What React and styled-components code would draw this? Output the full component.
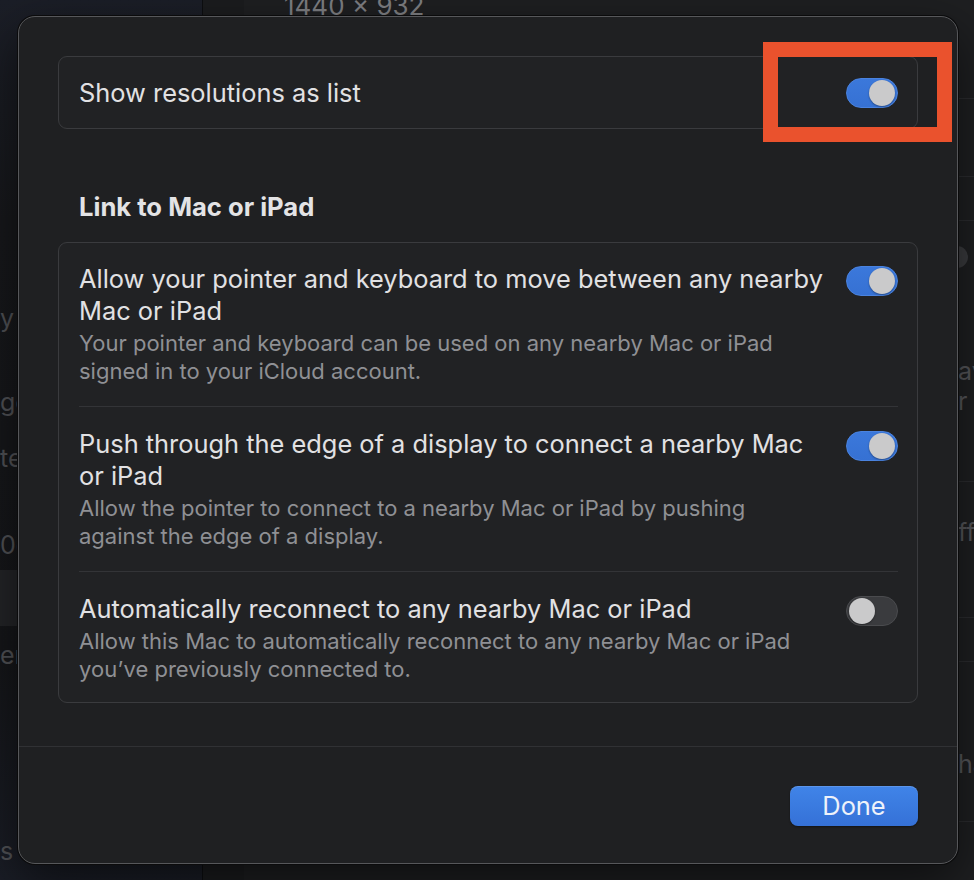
import React, { useState } from "react";
import styled, { createGlobalStyle } from "styled-components";

const Global = createGlobalStyle`
  html, body { margin: 0; padding: 0; background: #1e1f21; }
  body { font-family: Inter, "Noto Sans", "Liberation Sans", sans-serif; -webkit-font-smoothing: antialiased; }
  * { box-sizing: border-box; }
`;

const Page = styled.div`
  position: relative;
  width: 974px;
  height: 880px;
  overflow: hidden;
  display: flex;
  background: #1e1f21;
`;

/* ---------- backdrop (the settings window behind the sheet) ---------- */
const Sidebar = styled.aside`
  width: 203px;
  flex: none;
  display: flex;
  flex-direction: column;
  background: linear-gradient(180deg, #1b1e27 0%, #17181b 25%, #151619 75%, #1a1d26 100%);
  border-right: 1px solid #0d0e10;
`;

const SideItem = styled.div`
  height: ${(p) => p.$h}px;
  flex: none;
  display: flex;
  align-items: center;
  font-size: 25px;
  color: #505155;
  white-space: nowrap;
  background: ${(p) => (p.$active ? "#232427" : "transparent")};
`;

const Main = styled.main`
  flex: 1;
  display: flex;
  flex-direction: column;
  background: #1e1f21;
  border-left: 41px solid #1b1c1e;
`;

const SizeLabel = styled.div`
  height: 40px;
  flex: none;
  padding-left: 40px;
  margin-top: -7px;
  font-size: 26px;
  color: #7d7e82;
  line-height: 26px;
`;

const BackRow = styled.div`
  height: ${(p) => p.$h}px;
  flex: none;
  display: flex;
  align-items: center;
  justify-content: flex-end;
  border-bottom: ${(p) => (p.$line ? "1px solid #2b2c2f" : "none")};
  font-size: 25px;
  color: #55565a;
  white-space: nowrap;
  overflow: hidden;
`;

const BackText = styled.span`
  width: 16px;
  overflow: hidden;
`;

const BackKnob = styled.span`
  width: 16px;
  height: 22px;
  border-radius: 0 11px 11px 0;
  background: #3a3b3e;
  margin-right: 6px;
`;

/* ---------- sheet ---------- */
const Sheet = styled.section`
  position: absolute;
  left: 18px;
  top: 16px;
  width: 940px;
  height: 848px;
  display: flex;
  flex-direction: column;
  background: #1f2022;
  border: 1px solid #56575a;
  border-radius: 17px;
  box-shadow: 0 0 0 1px #0b0b0c, 0 18px 50px rgba(0, 0, 0, 0.55);
  color: #e1e1e3;
`;

const Body = styled.div`
  flex: 1;
  display: flex;
  flex-direction: column;
  padding: 39px 39px 43px 39px;
`;

const Card = styled.div`
  display: flex;
  flex-direction: column;
  background: #212224;
  border: 1px solid #3a3b3e;
  border-radius: 9px;
  padding: 0 19px 0 20px;
`;

const SingleRow = styled.div`
  height: 71px;
  display: flex;
  align-items: center;
  justify-content: space-between;
  font-size: 25.4px;
  color: #e1e1e3;
`;

const SectionTitle = styled.h2`
  margin: 64px 0 21px;
  padding-left: 21px;
  font-size: 25.6px;
  line-height: 28px;
  font-weight: 700;
  color: #e3e3e5;
`;

const Row = styled.div`
  display: flex;
  align-items: flex-start;
  justify-content: space-between;
  gap: 12px;
  padding: ${(p) => (p.$first ? "20px" : "21px")} 0 ${(p) => (p.$last ? "19px" : "21px")};
  border-top: ${(p) => (p.$first ? "none" : "1px solid #333437")};
`;

const Texts = styled.div`
  flex: 1;
  min-width: 0;
  display: flex;
  flex-direction: column;
  gap: 2px;
`;

const RowTitle = styled.div`
  font-size: 25.4px;
  line-height: 32px;
  color: #e1e1e3;
  white-space: nowrap;
`;

const RowDesc = styled.div`
  font-size: 22px;
  line-height: 28px;
  color: #8f9094;
  white-space: nowrap;
`;

const ToggleTrack = styled.button`
  flex: none;
  width: 52px;
  height: 30px;
  margin-top: ${(p) => p.$offset || 0}px;
  padding: 2px;
  border-radius: 15px;
  border: 1px solid ${(p) => (p.$on ? "#4a83df" : "#4a4b4e")};
  background: ${(p) => (p.$on ? "linear-gradient(180deg, #3b78db, #3671d3)" : "#3a3b3e")};
  display: flex;
  justify-content: ${(p) => (p.$on ? "flex-end" : "flex-start")};
  align-items: center;
  cursor: pointer;
`;

const Knob = styled.span`
  width: 26px;
  height: 26px;
  border-radius: 50%;
  background: #cacacb;
  box-shadow: 0 1px 2px rgba(0, 0, 0, 0.35);
`;

const Footer = styled.footer`
  display: flex;
  justify-content: flex-end;
  border-top: 1px solid #303134;
  padding: 39px 39px 37px;
`;

const DoneButton = styled.button`
  width: 128px;
  height: 40px;
  border: none;
  border-radius: 8px;
  background: linear-gradient(180deg, #4084e8 0%, #3571d7 100%);
  box-shadow: inset 0 1px 0 rgba(255, 255, 255, 0.15), 0 1px 2px rgba(0, 0, 0, 0.4);
  color: #eef2fa;
  font-family: inherit;
  font-size: 25.4px;
  line-height: 38px;
  cursor: pointer;
`;

const Annotation = styled.div`
  position: absolute;
  left: 763px;
  top: 42px;
  width: 189px;
  height: 100px;
  border: 15px solid #ea522d;
  pointer-events: none;
`;

function Toggle({ on, onClick, offset }) {
  return (
    <ToggleTrack $on={on} $offset={offset} onClick={onClick} aria-pressed={on}>
      <Knob />
    </ToggleTrack>
  );
}

const rows = [
  {
    title: ["Allow your pointer and keyboard to move between any nearby", "Mac or iPad"],
    desc: ["Your pointer and keyboard can be used on any nearby Mac or iPad", "signed in to your iCloud account."],
    on: true,
  },
  {
    title: ["Push through the edge of a display to connect a nearby Mac", "or iPad"],
    desc: ["Allow the pointer to connect to a nearby Mac or iPad by pushing", "against the edge of a display."],
    on: true,
  },
  {
    title: ["Automatically reconnect to any nearby Mac or iPad"],
    desc: ["Allow this Mac to automatically reconnect to any nearby Mac or iPad", "you\u2019ve previously connected to."],
    on: false,
  },
];

function Lines({ lines }) {
  return lines.map((l, i) => (
    <React.Fragment key={i}>
      {i > 0 && <br />}
      {l}
    </React.Fragment>
  ));
}

export default function App() {
  const [list, setList] = useState(true);
  const [states, setStates] = useState(rows.map((r) => r.on));

  return (
    <Page>
      <Global />
      <Sidebar>
        <SideItem $h={300} />
        <SideItem $h={36}>y</SideItem>
        <SideItem $h={48} />
        <SideItem $h={36}>ge</SideItem>
        <SideItem $h={20} />
        <SideItem $h={36}>te</SideItem>
        <SideItem $h={51} />
        <SideItem $h={36}>0c</SideItem>
        <SideItem $h={7} />
        <SideItem $h={56} $active />
        <SideItem $h={11} />
        <SideItem $h={36}>er</SideItem>
        <SideItem $h={160} />
        <SideItem $h={36}>s</SideItem>
      </Sidebar>
      <Main>
        <SizeLabel>1440 × 932</SizeLabel>
        <BackRow $h={66} $line />
        <BackRow $h={78} $line />
        <BackRow $h={44} $line />
        <BackRow $h={72}>
          <BackKnob />
        </BackRow>
        <BackRow $h={63} />
        <BackRow $h={30}>
          <BackText>av</BackText>
        </BackRow>
        <BackRow $h={30}>
          <BackText>r t</BackText>
        </BackRow>
        <BackRow $h={66} $line />
        <BackRow $h={30} />
        <BackRow $h={40}>
          <BackText>ff</BackText>
        </BackRow>
        <BackRow $h={66} $line />
        <BackRow $h={44} $line />
        <BackRow $h={84} />
        <BackRow $h={36}>
          <BackText>ha</BackText>
        </BackRow>
        <BackRow $h={40} $line />
      </Main>

      <Sheet role="dialog" aria-label="Display settings">
        <Body>
          <Card>
            <SingleRow>
              Show resolutions as list
              <Toggle on={list} onClick={() => setList(!list)} />
            </SingleRow>
          </Card>

          <SectionTitle>Link to Mac or iPad</SectionTitle>

          <Card>
            {rows.map((r, i) => (
              <Row key={i} $first={i === 0} $last={i === rows.length - 1}>
                <Texts>
                  <RowTitle>
                    <Lines lines={r.title} />
                  </RowTitle>
                  <RowDesc>
                    <Lines lines={r.desc} />
                  </RowDesc>
                </Texts>
                <Toggle
                  on={states[i]}
                  offset={3}
                  onClick={() => setStates(states.map((s, j) => (j === i ? !s : s)))}
                />
              </Row>
            ))}
          </Card>
        </Body>
        <Footer>
          <DoneButton>Done</DoneButton>
        </Footer>
      </Sheet>
      <Annotation />
    </Page>
  );
}
